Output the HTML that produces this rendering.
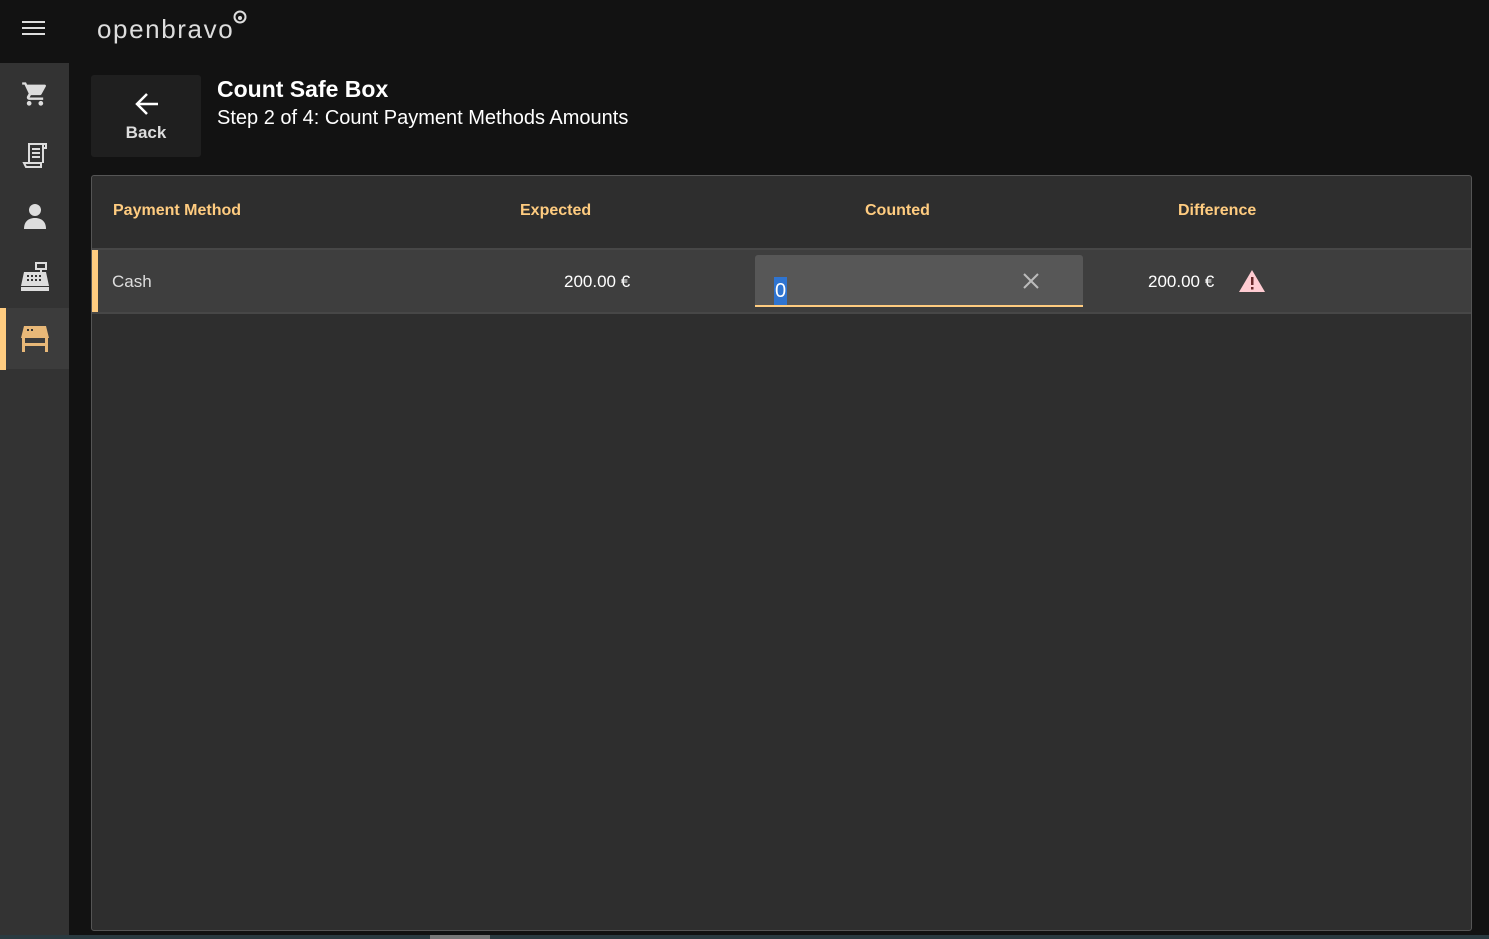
<!DOCTYPE html>
<html><head><meta charset="utf-8"><style>
*{margin:0;padding:0;box-sizing:border-box}
body{width:1489px;height:939px;background:#121212;font-family:"Liberation Sans",Roboto,sans-serif;position:relative;overflow:hidden;color:#fff}
.side{position:absolute;left:0;top:63px;width:69px;height:872px;background:#333}
.ico{position:absolute;left:0;width:69px;height:61px;display:flex;align-items:center;justify-content:center}
.sel{background:#3c3c3c}
.bar{position:absolute;left:0;top:308px;width:6px;height:62px;background:#ffcc80}
.back{position:absolute;left:91px;top:75px;width:110px;height:82px;background:#1f1f1f;border-radius:3px;text-align:center}
.back span{position:absolute;left:0;right:0;top:48px;font-weight:bold;font-size:17px;color:#ddd}
.panel{position:absolute;left:91px;top:175px;width:1381px;height:756px;background:#2e2e2e;border:1px solid #555;border-radius:3px}
.h{position:absolute;top:26px;font-weight:bold;font-size:16px;color:#ffcc80}
.row{position:absolute;left:0;top:72px;width:1379px;height:66px;background:#3e3e3e;border-top:2px solid #474747;border-bottom:2px solid #474747}
.acc{position:absolute;left:0;top:0;width:6px;height:100%;background:#ffcc80}
.t{position:absolute;top:22px;font-size:17px}
.inp{position:absolute;left:663px;top:5px;width:328px;height:52px;background:#575757;border-radius:3px 3px 0 0;border-bottom:2px solid #ffcc80}
.bot{position:absolute;left:0;top:935px;width:1489px;height:4px;background:#2a3a40}
</style></head><body>
<svg style="position:absolute;left:22px;top:20px" width="24" height="16"><g stroke="#ddd" stroke-width="2"><line x1="0" y1="2" x2="23" y2="2"/><line x1="0" y1="8" x2="23" y2="8"/><line x1="0" y1="14" x2="23" y2="14"/></g></svg>
<div style="position:absolute;left:97px;top:14px;font-size:26px;color:#ddd;letter-spacing:1.6px;font-family:'Liberation Sans',sans-serif">openbravo</div>
<svg style="position:absolute;left:233px;top:10px" width="14" height="14"><circle cx="7" cy="7" r="5.5" fill="none" stroke="#ddd" stroke-width="2"/><circle cx="7" cy="8" r="2" fill="#ddd"/></svg>
<div class="side">
<div class="ico" style="top:0"><svg width="28" height="28" viewBox="0 0 24 24"><path fill="#ddd" d="M7 18c-1.1 0-2 .9-2 2s.9 2 2 2 2-.9 2-2-.9-2-2-2zM1 2v2h2l3.6 7.6L5.2 14c-.1.3-.2.6-.2 1 0 1.1.9 2 2 2h12v-2H7.4l1.1-2h7.5c.8 0 1.4-.4 1.7-1l3.6-6.5c.1-.2.1-.3.1-.5 0-.6-.4-1-1-1H5.2l-.9-2H1zm16 16c-1.1 0-2 .9-2 2s.9 2 2 2 2-.9 2-2-.9-2-2-2z"/></svg></div>
<div class="ico" style="top:61px"><svg width="26" height="28" viewBox="0 0 26 28"><g fill="none" stroke="#ddd" stroke-width="2"><path d="M7 22V3h14v19"/><path d="M2 22h17v4H4z"/><path d="M21 3h3v4h-3"/><line x1="10" y1="8" x2="18" y2="8"/><line x1="10" y1="12" x2="18" y2="12"/><line x1="10" y1="16" x2="18" y2="16"/></g></svg></div>
<div class="ico" style="top:122px"><svg width="26" height="28" viewBox="0 0 26 28"><circle cx="13" cy="8" r="6" fill="#ddd"/><path fill="#ddd" d="M2 27c0-8 5-11 11-11s11 3 11 11z"/></svg></div>
<div class="ico" style="top:183px"><svg width="30" height="30" viewBox="0 0 30 30"><rect x="16" y="1" width="10" height="6" fill="none" stroke="#ddd" stroke-width="2"/><rect x="20" y="7" width="2" height="3" fill="#ddd"/><path fill="#ddd" d="M4 10h22l3 14H1z"/><rect x="1" y="25" width="28" height="4" fill="#ddd"/><g fill="#333"><rect x="7" y="13" width="2" height="2"/><rect x="11" y="13" width="2" height="2"/><rect x="15" y="13" width="2" height="2"/><rect x="19" y="13" width="2" height="2"/><rect x="7" y="17" width="2" height="2"/><rect x="11" y="17" width="2" height="2"/><rect x="15" y="17" width="2" height="2"/><rect x="19" y="17" width="2" height="2"/></g></svg></div>
<div class="ico sel" style="top:245px"><svg width="30" height="28" viewBox="0 0 30 28"><path fill="#e8b878" d="M4 1h22l3 12H1z"/><rect x="2" y="13" width="3" height="14" fill="#e8b878"/><rect x="25" y="13" width="3" height="14" fill="#e8b878"/><rect x="5" y="18" width="20" height="3" fill="#e8b878"/><rect x="7" y="4" width="2" height="2" fill="#333"/><rect x="11" y="4" width="2" height="2" fill="#333"/></svg></div>
</div>
<div class="bar"></div>
<div class="back"><svg style="position:absolute;left:43px;top:17px" width="26" height="24" viewBox="0 0 26 24"><g stroke="#fff" stroke-width="2.5" fill="none"><line x1="3" y1="12" x2="24" y2="12"/><polyline points="13,2 3,12 13,22"/></g></svg><span>Back</span></div>
<div style="position:absolute;left:217px;top:76px;font-size:23px;font-weight:bold">Count Safe Box</div>
<div style="position:absolute;left:217px;top:107px;font-size:20px">Step 2 of 4: Count Payment Methods Amounts</div>
<div class="panel">
<div class="h" style="left:21px">Payment Method</div>
<div class="h" style="left:428px">Expected</div>
<div class="h" style="left:773px">Counted</div>
<div class="h" style="left:1086px">Difference</div>
<div class="row"><div class="acc"></div>
<div class="t" style="left:20px;color:#ddd">Cash</div>
<div class="t" style="left:472px">200.00 €</div>
<div class="inp"><div style="position:absolute;left:19px;top:22px;background:#2f74d0;color:#fff;font-size:20px;line-height:28px;padding:0 1px">0</div>
<svg style="position:absolute;left:268px;top:18px" width="16" height="16"><g stroke="#bbb" stroke-width="2"><line x1="1" y1="1" x2="15" y2="15"/><line x1="15" y1="1" x2="1" y2="15"/></g></svg></div>
<div class="t" style="left:1056px">200.00 €</div>
<svg style="position:absolute;left:1146px;top:18px" width="28" height="26"><path d="M14 2L27 24H1z" fill="#ffccd2"/><rect x="13" y="9" width="2.5" height="8" fill="#6a2a2a"/><rect x="13" y="19" width="2.5" height="2.5" fill="#6a2a2a"/></svg>
</div>
</div>
<div class="bot"></div>
<div style="position:absolute;left:430px;top:935px;width:60px;height:4px;background:#777"></div>
</body></html>
